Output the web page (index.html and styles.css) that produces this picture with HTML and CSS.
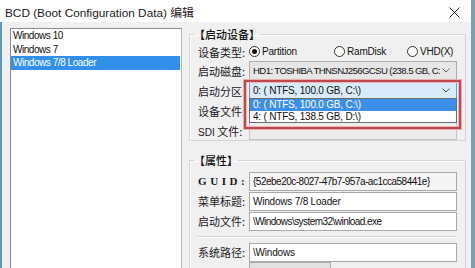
FILE: index.html
```html
<!DOCTYPE html>
<html>
<head>
<meta charset="utf-8">
<link rel="stylesheet" href="styles.css">
</head>
<body>
<div class="window">
  <div class="titlebar">
    <span class="title">BCD (Boot Configuration Data) 编辑</span>
    <svg class="close" width="11" height="11" viewBox="0 0 11 11"><path d="M0.5 0.5 L10.5 10.5 M10.5 0.5 L0.5 10.5" stroke="#222" stroke-width="1" fill="none"/></svg>
  </div>
  <div class="body">
    <div class="list">
      <div class="item">Windows 10</div>
      <div class="item">Windows 7</div>
      <div class="item sel">Windows 7/8 Loader</div>
    </div>
    <div class="right">
      <fieldset class="group g1">
        <legend class="heading">【启动设备】</legend>
        <div class="row first">
          <span class="label">设备类型:</span>
          <div class="radios">
            <span class="radio r1"><span class="dot on"></span>Partition</span>
            <span class="radio r2"><span class="dot"></span>RamDisk</span>
            <span class="radio r3"><span class="dot"></span>VHD(X)</span>
          </div>
        </div>
        <div class="row">
          <span class="label">启动磁盘:</span>
          <div class="field combo gray"><span class="val hd">HD1: TOSHIBA THNSNJ256GCSU (238.5 GB, C:</span><svg class="chev" width="8" height="5" viewBox="0 0 8 5"><polyline points="0.5,0.5 4,4 7.5,0.5" fill="none" stroke="#666" stroke-width="1"/></svg></div>
        </div>
        <div class="row">
          <span class="label">启动分区:</span>
          <div class="field combo focus">
            <span class="val">0: ( NTFS, 100.0 GB, C:\)</span><svg class="chev" width="8" height="5" viewBox="0 0 8 5"><polyline points="0.5,0.5 4,4 7.5,0.5" fill="none" stroke="#555" stroke-width="1"/></svg>
            <div class="dropdown">
              <div class="opt sel">0: ( NTFS, 100.0 GB, C:\)</div>
              <div class="opt">4: ( NTFS, 138.5 GB, D:\)</div>
            </div>
            <div class="redbox"></div>
          </div>
        </div>
        <div class="row">
          <span class="label">设备文件:</span>
          <div class="field gray"></div>
        </div>
        <div class="row">
          <span class="label"><span class="lat">SDI</span> 文件:</span>
          <div class="field gray"></div>
        </div>
      </fieldset>
      <fieldset class="group g2">
        <legend class="heading">【属性】</legend>
        <div class="row guidrow">
          <span class="label guid">GUID:</span>
          <div class="field ro"><span class="val guidval">{52ebe20c-8027-47b7-957a-ac1cca58441e}</span></div>
        </div>
        <div class="row">
          <span class="label">菜单标题:</span>
          <div class="field"><span class="val">Windows 7/8 Loader</span></div>
        </div>
        <div class="row">
          <span class="label">启动文件:</span>
          <div class="field"><span class="val tight">\Windows\system32\winload.exe</span></div>
        </div>
        <div class="sep"></div>
        <div class="row">
          <span class="label">系统路径:</span>
          <div class="field"><span class="val">\Windows</span></div>
        </div>
        <div class="row tail">
          <span class="label"></span>
          <div class="btn"></div>
        </div>
      </fieldset>
    </div>
  </div>
</div>
</body>
</html>
```

FILE: styles.css
```css
html, body {
  margin: 0;
  padding: 0;
  background: #f0f0f0;
}
.window {
  width: 475px;
  height: 268px;
  overflow: hidden;
  background: #f0f0f0;
  font-family: "Liberation Sans", "Noto Sans CJK SC", sans-serif;
  color: #111;
}
.titlebar {
  height: 22px;
  background: #fff;
  display: flex;
  align-items: center;
  justify-content: space-between;
  padding: 0 11px 0 5px;
  border-right: 4px solid #7d9db3;
  box-sizing: border-box;
}
.title {
  font-size: 11.8px;
  color: #1a1a1a;
  padding-top: 1px;
}
.close {
  display: block;
  margin-top: 2px;
}
.body {
  display: flex;
  gap: 7px;
  padding: 6px 0 0 8px;
  border-left: 2px solid #5f95b8;
  border-right: 4px solid #7d9db3;
  height: 246px;
  box-sizing: border-box;
}
.list {
  width: 172px;
  height: 260px;
  flex: none;
  background: #fff;
  border: 1px solid #8c8c8c;
  border-right-color: #b9b9b9;
  box-sizing: border-box;
  font-size: 10px;
  letter-spacing: -0.45px;
}
.item {
  height: 13.5px;
  line-height: 13.5px;
  padding-left: 2px;
  color: #111;
}
.item.sel {
  background: #3390ea;
  color: #fff;
  margin-right: 1px;
}
.right {
  width: 277px;
  flex: none;
  display: flex;
  flex-direction: column;
}
.group {
  margin: 0;
  padding: 0 8px 0 8px;
  min-width: 0;
  border: 1px solid #d6d6d6;
  box-shadow: inset 1px 1px 0 #fbfbfb;
  position: relative;
  box-sizing: border-box;
}
.g1 {
  height: 118px;
}
.g2 {
  height: 130px;
  margin-top: 13px;
}
.heading {
  font-family: "Noto Sans CJK SC", sans-serif;
  font-size: 11px;
  line-height: 13px;
  padding: 0;
  margin-left: -4px;
  color: #111;
  font-weight: 500;
}
.row {
  display: flex;
  align-items: center;
  height: 19px;
  margin-top: 1px;
}
.row.first {
  height: 17px;
  margin-top: 2px;
}
.row.guidrow {
  margin-top: 4.5px;
}
.label {
  width: 51px;
  flex: none;
  font-family: "Noto Sans CJK SC", sans-serif;
  font-size: 11px;
  color: #1a1a1a;
  white-space: nowrap;
}
.label .lat {
  font-family: "Liberation Sans", sans-serif;
  font-size: 10px;
}
.label.guid {
  font-family: "Liberation Serif", serif;
  font-weight: bold;
  font-size: 11px;
  letter-spacing: 3.6px;
}
.radios {
  display: flex;
  align-items: center;
  font-size: 10px;
  letter-spacing: -0.2px;
}
.radio {
  display: flex;
  align-items: center;
  gap: 2px;
}
.r1 { width: 85px; }
.r2 { width: 73px; }
.dot {
  width: 11px;
  height: 11px;
  box-sizing: border-box;
  border: 1px solid #333;
  border-radius: 50%;
  background: #fff;
  display: flex;
  align-items: center;
  justify-content: center;
}
.dot.on::after {
  content: "";
  width: 5px;
  height: 5px;
  border-radius: 50%;
  background: #111;
}
.field {
  width: 208px;
  height: 19px;
  box-sizing: border-box;
  border: 1px solid #a9a9a9;
  background: #fff;
  display: flex;
  align-items: center;
  padding-left: 3px;
  font-size: 10px;
  letter-spacing: -0.2px;
  position: relative;
}
.field.gray {
  background: #ececec;
  border-color: #c4c4c4;
}
.field.ro {
  background: #f5f5f5;
}
.combo {
  justify-content: space-between;
  padding-right: 6px;
}
.combo.gray {
  background: #e6e6e6;
  border-color: #adadad;
}
.combo.focus {
  background: #d9ebfa;
  border-color: #5a9fd6;
  height: 17px;
}
.chev {
  display: block;
  flex: none;
}
.val {
  white-space: nowrap;
  overflow: hidden;
}
.val.hd {
  font-size: 9.6px;
  letter-spacing: -0.6px;
}
.val.tight {
  letter-spacing: -0.55px;
}
.val.guidval {
  letter-spacing: -0.5px;
}
.dropdown {
  position: absolute;
  left: -1px;
  right: -1px;
  top: 100%;
  border: 1px solid #6e6e6e;
  background: #fff;
  z-index: 2;
}
.opt {
  height: 11.5px;
  line-height: 11.5px;
  padding-left: 3px;
  color: #111;
}
.opt.sel {
  background: #3c8fe8;
  color: #fff;
}
.redbox {
  position: absolute;
  left: -6px;
  right: -5px;
  top: -3px;
  height: 45px;
  border: 2px solid #c0474d;
  box-shadow: 0 0 0 1px #e9b0b2, inset 0 0 0 1px #ecb6b8;
  z-index: 3;
  pointer-events: none;
}
.sep {
  height: 1px;
  background: #d2d2d2;
  border-bottom: 1px solid #fff;
  margin: 5px 0 5px 0;
}
.tail {
  height: 10px;
}
.btn {
  width: 80px;
  height: 10px;
  background: #e1e1e1;
  border: 1px solid #adadad;
}
```
